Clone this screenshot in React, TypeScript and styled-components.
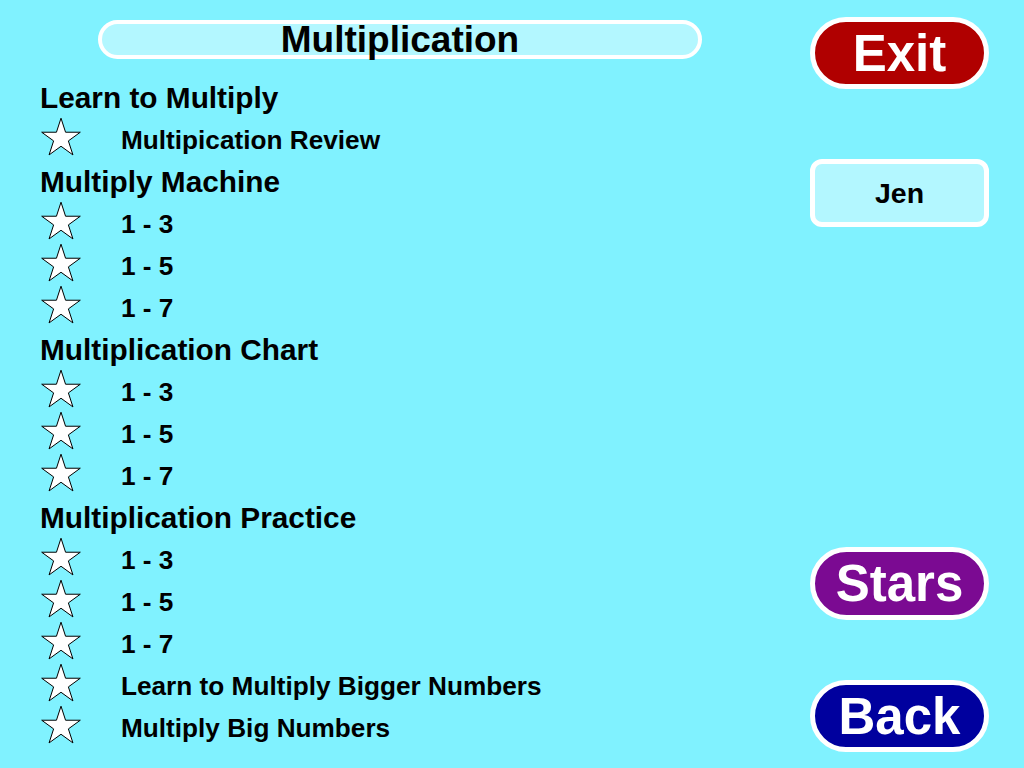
import React from "react";
import styled, { createGlobalStyle } from "styled-components";

const Global = createGlobalStyle`
  html, body { margin: 0; padding: 0; }
  body {
    background: #80f2ff;
    font-family: "Liberation Sans", Arial, sans-serif;
    font-weight: bold;
  }
`;

const Page = styled.div`
  width: 1024px;
  height: 768px;
  display: flex;
  background: #80f2ff;
  overflow: hidden;
`;

const LeftColumn = styled.div`
  width: 770px;
  padding: 20px 0 0 40px;
  box-sizing: border-box;
  display: flex;
  flex-direction: column;
`;

const TitleBar = styled.div`
  margin-left: 58px;
  width: 604px;
  height: 39px;
  box-sizing: border-box;
  border: 4px solid #ffffff;
  border-radius: 20px;
  background: #b3f7ff;
  display: flex;
  align-items: center;
  justify-content: center;
  font-size: 37px;
  color: #000;
`;

const List = styled.div`
  margin-top: 18px;
  display: flex;
  flex-direction: column;
`;

const SectionHeader = styled.div`
  height: 42px;
  display: flex;
  align-items: center;
  font-size: 29.8px;
  color: #000;
  white-space: nowrap;
`;

const ItemRow = styled.div`
  height: 42px;
  display: flex;
  align-items: center;
`;

const StarSlot = styled.div`
  width: 81px;
  height: 42px;
  flex: none;
  display: flex;
  align-items: center;
`;

const StarIcon = styled.svg`
  width: 42px;
  height: 42px;
  overflow: visible;
  display: block;
`;

const ItemLabel = styled.span`
  font-size: 26.2px;
  color: #000;
  white-space: nowrap;
`;

const RightColumn = styled.div`
  margin-left: 40px;
  width: 179px;
  padding: 17px 0 16px;
  box-sizing: border-box;
  display: flex;
  flex-direction: column;
`;

const PillButton = styled.button<{ $bg: string; $h: number }>`
  width: 179px;
  height: ${(p) => p.$h}px;
  box-sizing: border-box;
  border: 5px solid #ffffff;
  border-radius: 40px;
  background: ${(p) => p.$bg};
  color: #ffffff;
  font-family: "Liberation Sans", Arial, sans-serif;
  font-weight: bold;
  font-size: 51px;
  display: flex;
  align-items: center;
  justify-content: center;
  padding: 0;
  line-height: 1;
  cursor: pointer;
`;

const NameBox = styled.div`
  margin-top: 70px;
  width: 179px;
  height: 68px;
  box-sizing: border-box;
  border: 5px solid #ffffff;
  border-radius: 12px;
  background: #b3f7ff;
  display: flex;
  align-items: center;
  justify-content: center;
  font-size: 28.5px;
  color: #000;
`;

const Spacer = styled.div`
  flex: 1;
`;

const Gap = styled.div<{ $h: number }>`
  height: ${(p) => p.$h}px;
  flex: none;
`;

const starPoints = (() => {
  const cx = 21;
  const cy = 19.5;
  const R = 20.3;
  const r = R * 0.382;
  const pts: string[] = [];
  for (let i = 0; i < 10; i++) {
    const a = (i * 36 * Math.PI) / 180;
    const rad = i % 2 === 0 ? R : r;
    pts.push(`${(cx + rad * Math.sin(a)).toFixed(2)},${(cy - rad * Math.cos(a)).toFixed(2)}`);
  }
  return pts.join(" ");
})();

const Star = () => (
  <StarIcon viewBox="0 0 42 42">
    <polygon points={starPoints} fill="#ffffff" stroke="#000000" strokeWidth="1" strokeLinejoin="miter" />
  </StarIcon>
);

type Entry = { kind: "header"; text: string } | { kind: "item"; text: string };

const entries: Entry[] = [
  { kind: "header", text: "Learn to Multiply" },
  { kind: "item", text: "Multipication Review" },
  { kind: "header", text: "Multiply Machine" },
  { kind: "item", text: "1 - 3" },
  { kind: "item", text: "1 - 5" },
  { kind: "item", text: "1 - 7" },
  { kind: "header", text: "Multiplication Chart" },
  { kind: "item", text: "1 - 3" },
  { kind: "item", text: "1 - 5" },
  { kind: "item", text: "1 - 7" },
  { kind: "header", text: "Multiplication Practice" },
  { kind: "item", text: "1 - 3" },
  { kind: "item", text: "1 - 5" },
  { kind: "item", text: "1 - 7" },
  { kind: "item", text: "Learn to Multiply Bigger Numbers" },
  { kind: "item", text: "Multiply Big Numbers" },
];

export default function App() {
  return (
    <>
      <Global />
      <Page>
        <LeftColumn>
          <TitleBar>Multiplication</TitleBar>
          <List>
            {entries.map((e, i) =>
              e.kind === "header" ? (
                <SectionHeader key={i}>{e.text}</SectionHeader>
              ) : (
                <ItemRow key={i}>
                  <StarSlot>
                    <Star />
                  </StarSlot>
                  <ItemLabel>{e.text}</ItemLabel>
                </ItemRow>
              )
            )}
          </List>
        </LeftColumn>
        <RightColumn>
          <PillButton $bg="#b00000" $h={72}>Exit</PillButton>
          <NameBox>Jen</NameBox>
          <Spacer />
          <PillButton $bg="#7b0a92" $h={73}>Stars</PillButton>
          <Gap $h={60} />
          <PillButton $bg="#00009e" $h={72}>Back</PillButton>
        </RightColumn>
      </Page>
    </>
  );
}
